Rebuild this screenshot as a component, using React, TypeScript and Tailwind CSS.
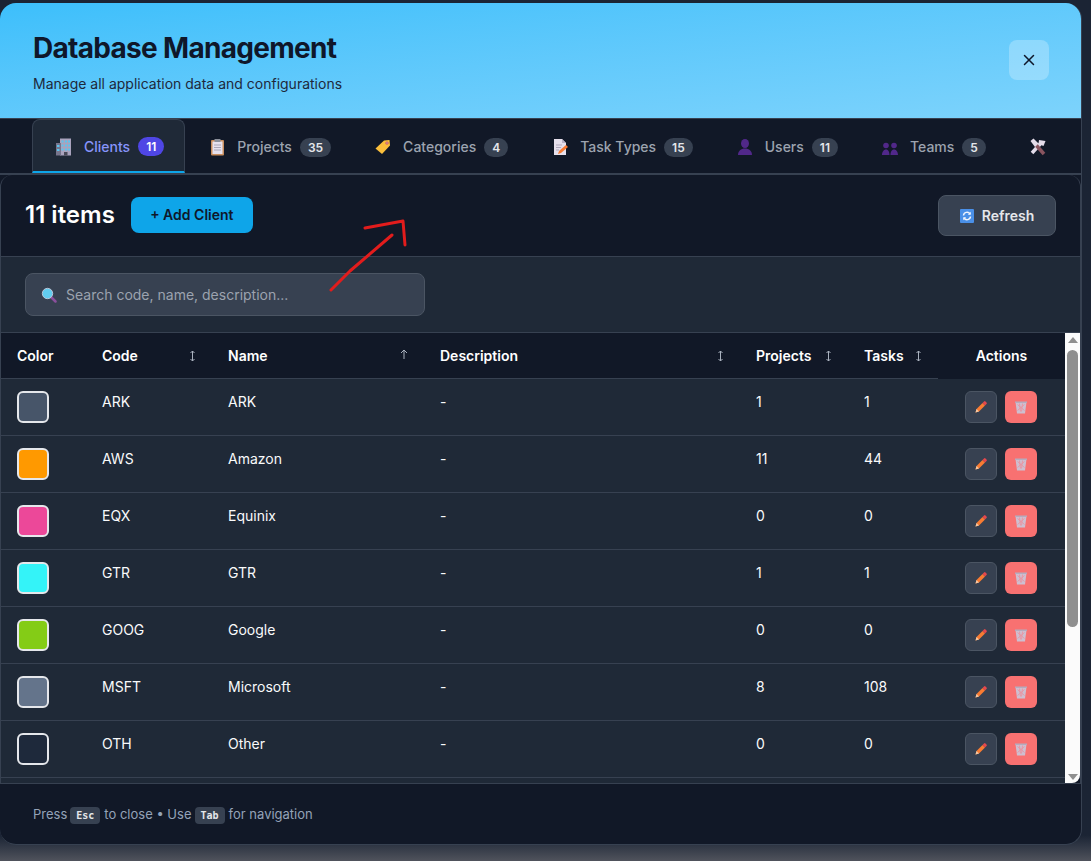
import { X } from "lucide-react";
import type { ReactNode } from "react";

// small stand-ins for the colour emoji in the tabs and buttons
const BuildingIcon = () => (
  <svg width="18" height="18" viewBox="0 0 18 18">
    <rect x="5" y="0.500" width="11" height="17" fill="#a9a3bd" />
    <rect x="1" y="5" width="5" height="12.500" fill="#77758c" />
    <path d="M6.500 2.500h2v2h-2zM10 2.500h2v2h-2zM13 2.500h2v2h-2zM6.500 6.500h2v2h-2zM10 6.500h2v2h-2zM13 6.500h2v2h-2zM6.500 10.500h2v2h-2zM10 10.500h2v2h-2zM13 10.500h2v2h-2z" fill="#5cc4ee" />
    <path d="M2 7h2.500v2H2zM2 11h2.500v2H2z" fill="#5cc4ee" />
    <rect x="9" y="14" width="3.500" height="3.500" fill="#4a4a58" />
  </svg>
);
const ClipboardIcon = () => (
  <svg width="18" height="18" viewBox="0 0 18 18">
    <rect x="3" y="2" width="13" height="15.500" rx="1" fill="#c98e5e" />
    <rect x="4.500" y="3.500" width="10" height="12.500" fill="#e6e1ee" />
    <rect x="6.500" y="1" width="6" height="3" fill="#8b8f9a" />
    <path d="M6 7h7M6 9.500h7M6 12h7" stroke="#a9a6b8" strokeWidth="1" />
  </svg>
);
const TagIcon = () => (
  <svg width="18" height="18" viewBox="0 0 18 18">
    <path d="M10 2.500l5.500-.5.500 5.500-8 8.500-6.500-5.500z" fill="#fbbf3c" />
    <circle cx="13" cy="5" r="1.600" fill="#c2476b" />
    <circle cx="13" cy="5" r="0.700" fill="#f3d9a0" />
  </svg>
);
const MemoIcon = () => (
  <svg width="18" height="18" viewBox="0 0 18 18">
    <path d="M3 1h8l4 4v12H3z" fill="#e6e0ec" />
    <path d="M11 1l4 4h-4z" fill="#b9b2c6" />
    <path d="M5 7h6M5 9.500h5M5 12h3" stroke="#b0a9bd" strokeWidth="1" />
    <path d="M7 16l1-3 7-6 2 2-7 6z" fill="#f97b32" />
  </svg>
);
const UserIcon = () => (
  <svg width="18" height="18" viewBox="0 0 18 18">
    <ellipse cx="9" cy="5.500" rx="4" ry="4.500" fill="#51288a" />
    <path d="M2 17c0-4 3-6.500 7-6.500s7 2.500 7 6.500z" fill="#51288a" />
  </svg>
);
const UsersIcon = () => (
  <svg width="18" height="18" viewBox="0 0 18 18">
    <g fill="#51288a">
      <circle cx="5" cy="7.500" r="2.800" />
      <circle cx="13" cy="7.500" r="2.800" />
      <path d="M1 17c0-3 1.500-5.500 4-5.500s3.500 2.500 3.500 5.500zM9.500 17c0-3 1-5.500 3.500-5.500s4 2.500 4 5.500z" />
    </g>
  </svg>
);
const ToolsIcon = () => (
  <svg width="18" height="18" viewBox="0 0 18 18">
    <path d="M3 15L12 5" stroke="#e4dcea" strokeWidth="3.500" />
    <path d="M10 2l6.500 1-2 5-5-2z" fill="#e4dcea" />
    <path d="M15 16L7 7" stroke="#8a5560" strokeWidth="3.500" />
    <path d="M1.500 3L4.500 .5 9.500 5.500 6 9z" fill="#e4dcea" />
  </svg>
);
const SearchIcon = () => (
  <svg width="16" height="16" viewBox="0 0 16 16">
    <path d="M9.500 9.500L14.500 14.500" stroke="#8a4f9c" strokeWidth="2.500" strokeLinecap="round" />
    <circle cx="6.500" cy="6.500" r="5.200" fill="#62cdf0" stroke="#b8c4d8" strokeWidth="1" />
  </svg>
);
const RefreshIcon = () => (
  <svg width="14" height="14" viewBox="0 0 14 14">
    <rect width="14" height="14" rx="1" fill="#4a90e8" />
    <path d="M3.500 6.500A3.500 3.500 0 0 1 10 5M10.500 7.500A3.500 3.500 0 0 1 4 9" fill="none" stroke="#eef4fd" strokeWidth="1.500" />
    <path d="M10.800 2.800v3h-3zM3.200 11.200v-3h3z" fill="#eef4fd" />
  </svg>
);
const PencilIcon = () => (
  <svg width="14" height="14" viewBox="0 0 14 14">
    <path d="M1.500 12.500l1-3.500 6-6 2.500 2.500-6 6z" fill="#f97b32" />
    <path d="M8.500 3l1.500-1.500a1 1 0 0 1 1.500 0l1 1a1 1 0 0 1 0 1.500L11 5.500z" fill="#e5484d" />
    <path d="M1.500 12.500l1-3.500 2.500 2.500z" fill="#f3c9a5" />
  </svg>
);
const TrashIcon = () => (
  <svg width="14" height="14" viewBox="0 0 14 14">
    <path d="M1.500 2h11L11 13.500H3z" fill="#cdbfd0" />
    <path d="M3.500 4.500l7 6M10.500 4.500l-7 6M5.500 3.500l1 8M8.500 3.500l-1 8" stroke="#ee8f9c" strokeWidth="0.800" />
    <rect x="1" y="1.500" width="12" height="1.500" fill="#b5abbd" />
  </svg>
);
const SortBoth = () => (
  <svg width="7" height="12" viewBox="0 0 7 12" fill="none" stroke="#aab2bf" strokeWidth="1">
    <path d="M3.500 1v10M1.500 3l2-2 2 2M1.500 9l2 2 2-2" />
  </svg>
);
const SortUp = () => (
  <svg width="8" height="10" viewBox="0 0 8 10" fill="none" stroke="#aab2bf" strokeWidth="1" className="-translate-y-[2px]">
    <path d="M4 1v9M1 4l3-3 3 3" />
  </svg>
);

const tabs: { label: string; count?: number; icon: ReactNode; active?: boolean }[] = [
  { label: "Clients", count: 11, icon: <BuildingIcon />, active: true },
  { label: "Projects", count: 35, icon: <ClipboardIcon /> },
  { label: "Categories", count: 4, icon: <TagIcon /> },
  { label: "Task Types", count: 15, icon: <MemoIcon /> },
  { label: "Users", count: 11, icon: <UserIcon /> },
  { label: "Teams", count: 5, icon: <UsersIcon /> },
  { label: "", icon: <ToolsIcon /> },
];

const clients = [
  { color: "bg-[#475569]", code: "ARK", name: "ARK", projects: 1, tasks: 1 },
  { color: "bg-[#ff9900]", code: "AWS", name: "Amazon", projects: 11, tasks: 44 },
  { color: "bg-[#ec4899]", code: "EQX", name: "Equinix", projects: 0, tasks: 0 },
  { color: "bg-[#34f3f8]", code: "GTR", name: "GTR", projects: 1, tasks: 1 },
  { color: "bg-[#84cc16]", code: "GOOG", name: "Google", projects: 0, tasks: 0 },
  { color: "bg-[#64748b]", code: "MSFT", name: "Microsoft", projects: 8, tasks: 108 },
  { color: "bg-[#1e293b]", code: "OTH", name: "Other", projects: 0, tasks: 0 },
];

const columns: { label: string; width: string; sort?: ReactNode }[] = [
  { label: "Color", width: "w-[85px]" },
  { label: "Code", width: "w-[126px]", sort: <SortBoth /> },
  { label: "Name", width: "w-[212px]", sort: <SortUp /> },
  { label: "Description", width: "w-[316px]", sort: <SortBoth /> },
  { label: "Projects", width: "w-[108px]", sort: <SortBoth /> },
  { label: "Tasks", width: "w-[90px]", sort: <SortBoth /> },
];

const cell = "border-b border-[#374151] px-4 pt-3 align-top leading-[22px]";
const kbd = "mr-[4px] ml-[3px] rounded bg-[#374151] px-[6px] font-['DejaVu_Sans_Mono',monospace] text-[10px] leading-[17px] font-bold text-[#e5e7eb]";

export default function App() {
  return (
    <div className="relative h-[861px] overflow-hidden bg-gradient-to-b from-[#1b2434] from-[97%] to-[#50535c] font-['Inter',sans-serif]">
      <div className="mt-[3px] flex h-[842px] w-[1082px] flex-col overflow-hidden rounded-2xl border-r border-b border-[#374151] bg-[#111827]">
        {/* Header */}
        <div className="flex h-[116px] shrink-0 items-start justify-between border-b border-[#374151] bg-gradient-to-br from-[#3cbffb] to-[#7dd3fc] pr-8 pl-[33px]">
          <div className="pt-[27px]">
            <h1 className="text-[28px] leading-9 font-bold tracking-[-0.7px] text-[#0f172a]">Database Management</h1>
            <p className="mt-2 text-sm leading-5 text-[#1e293b]">Manage all application data and configurations</p>
          </div>
          <button className="mt-[37px] flex h-10 w-10 items-center justify-center rounded-lg bg-white/25 text-[#0f172a]">
            <X size={18} strokeWidth={2} />
          </button>
        </div>

        {/* Tabs */}
        <div className="flex h-[56px] shrink-0 gap-[2px] overflow-hidden border-b-2 border-[#374151] pl-8">
          {tabs.map((t) => (
            <div
              key={t.label || "tools"}
              className={
                t.active
                  ? "flex shrink-0 items-center gap-[10px] rounded-t-lg border-x border-t border-b-2 border-[#374151] border-b-[#0ea5e9] bg-[#1f2937] pt-[2px] pr-5 pl-[21px] text-sm font-medium text-[#8794fb]"
                  : "flex shrink-0 items-center gap-[10px] px-5 pt-[2px] text-sm font-medium text-[#9ca3af]"
              }
            >
              <span className="flex w-5 justify-center">{t.icon}</span>
              {t.label && (
                <span className="flex items-center gap-2">
                  {t.label}
                  <span
                    className={
                      t.active
                        ? "rounded-full bg-[#4f46e5] px-2 text-xs leading-[19px] font-semibold text-white"
                        : "rounded-full bg-[#374151] px-2 text-xs leading-[19px] font-semibold text-[#e5e7eb]"
                    }
                  >
                    {t.count}
                  </span>
                </span>
              )}
            </div>
          ))}
        </div>

        {/* Panel */}
        <div className="flex h-[609px] shrink-0 flex-col overflow-hidden rounded-t-xl border-x border-b border-[#374151]">
          <div className="flex h-[82px] shrink-0 items-center justify-between border-b border-[#374151] pr-[24px] pb-px pl-6">
            <div className="flex items-center gap-4">
              <span className="text-2xl font-semibold text-white">11 items</span>
              <button className="h-9 w-[122px] rounded-lg bg-[#0ea5e9] text-sm font-semibold text-[#0f172a]">+ Add Client</button>
            </div>
            <button className="mt-px flex h-[41px] w-[118px] items-center justify-center gap-2 rounded-lg border border-[#4b5563] bg-[#374151] text-sm font-semibold text-[#e5e7eb]">
              <RefreshIcon />
              Refresh
            </button>
          </div>

          <div className="flex h-[76px] shrink-0 items-center border-b border-[#374151] bg-[#1f2937] pl-6">
            <div className="flex h-[43px] w-[400px] items-center gap-[9px] rounded-lg border border-[#4b5563] bg-[#374151] pl-[15px]">
              <SearchIcon />
              <input
                readOnly
                placeholder="Search code, name, description..."
                className="w-[340px] bg-transparent text-sm outline-none placeholder:text-[#9ca3af]"
              />
            </div>
          </div>

          <div className="flex min-h-0 flex-1">
            <div className="min-w-0 flex-1 overflow-hidden bg-[#1f2937]">
              <table className="w-[1064px] table-fixed border-separate border-spacing-0 text-sm text-[#f9fafb]">
                <thead>
                  <tr className="h-[46px] bg-[#111827] text-white">
                    {columns.map((c) => (
                      <th key={c.label} className={`${c.width} border-b border-[#374151] px-4 text-left font-semibold`}>
                        <span className="flex items-center justify-between">
                          {c.label}
                          {c.sort}
                        </span>
                      </th>
                    ))}
                    <th className="font-semibold">Actions</th>
                  </tr>
                </thead>
                <tbody>
                  {clients.map((c) => (
                    <tr key={c.code} className="h-[57px]">
                      <td className={cell}>
                        <div className={`h-8 w-8 rounded-md border-2 border-[#e5e7eb] ${c.color}`} />
                      </td>
                      <td className={cell}>{c.code}</td>
                      <td className={cell}>{c.name}</td>
                      <td className={cell}>-</td>
                      <td className={cell}>{c.projects}</td>
                      <td className={cell}>{c.tasks}</td>
                      <td className="border-b border-[#374151] pt-3 pl-[27px] align-top">
                        <div className="flex gap-2">
                          <button className="flex h-8 w-8 items-center justify-center rounded-md border border-[#4b5563] bg-[#374151]">
                            <PencilIcon />
                          </button>
                          <button className="flex h-8 w-8 items-center justify-center rounded-md bg-[#f87171]">
                            <TrashIcon />
                          </button>
                        </div>
                      </td>
                    </tr>
                  ))}
                  <tr className="h-[57px]">
                    <td colSpan={7} />
                  </tr>
                </tbody>
              </table>
            </div>

            {/* Scrollbar */}
            <div className="flex w-[15px] shrink-0 flex-col items-center rounded-br-lg bg-[#fbfbfb]">
              <span className="mt-[4px] h-0 w-0 border-x-[5px] border-b-[6px] border-x-transparent border-b-[#8f8f8f]" />
              <span className="mt-[7px] h-[277px] w-[11px] rounded-full bg-[#8f8f8f]" />
              <span className="mt-auto mb-[3px] h-0 w-0 border-x-[5px] border-t-[6px] border-x-transparent border-t-[#8f8f8f]" />
            </div>
          </div>
        </div>

        {/* Footer */}
        <div className="flex flex-1 items-center pt-[2px] pl-[33px] text-[13px] text-[#94a3b8]">
          Press
          <kbd className={kbd}>Esc</kbd>
          to close • Use
          <kbd className={kbd}>Tab</kbd>
          for navigation
        </div>
      </div>

      {/* Hand-drawn annotation over the screenshot */}
      <svg className="pointer-events-none absolute top-[215px] left-[325px]" width="90" height="82" viewBox="325 215 90 82">
        <path d="M331 290L350 271 392 235M365 228L403 221 405 245" fill="none" stroke="#e21c1c" strokeWidth="3" strokeLinecap="round" strokeLinejoin="round" />
      </svg>
    </div>
  );
}
